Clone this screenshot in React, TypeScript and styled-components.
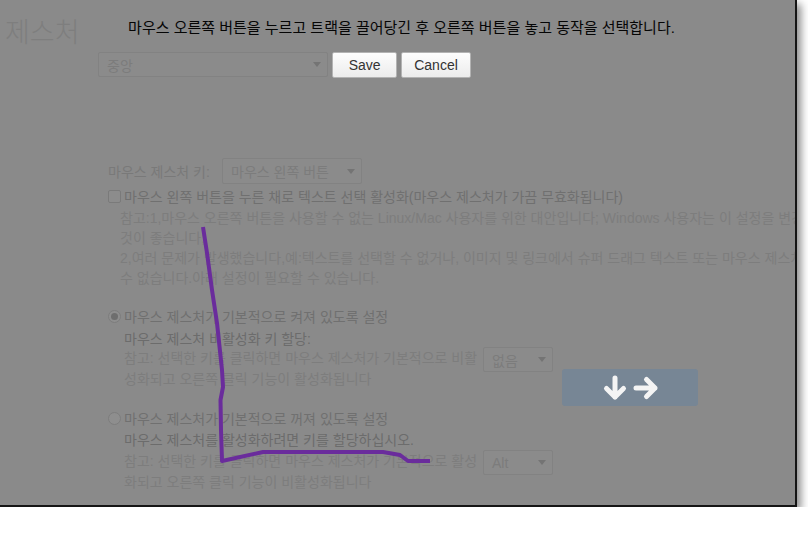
import React from 'react';
import styled, { createGlobalStyle } from 'styled-components';

const GlobalStyle = createGlobalStyle`
  html, body { margin: 0; padding: 0; background: #ffffff; }
  body { font-family: "Liberation Sans", "Noto Sans CJK KR", sans-serif; }
`;

const Window = styled.div`
  position: relative;
  box-sizing: border-box;
  width: 797px;
  height: 507px;
  border-right: 2px solid #151515;
  border-bottom: 2px solid #151515;
  background: #8a8a8a;
  overflow: hidden;
  box-shadow: 4px 4px 8px rgba(0, 0, 0, 0.45);
`;

const Page = styled.div`
  padding-top: 13px;
  font-size: 14px;
  color: #7d7d7d;
  white-space: nowrap;
`;

const Title = styled.h1`
  margin: 0 0 0 5px;
  font-family: "Noto Sans CJK KR", sans-serif;
  font-size: 27px;
  font-weight: 300;
  line-height: 36px;
  color: #7e7e7e;
`;

const Select = styled.div<{ $w: number; $h?: number }>`
  display: flex;
  align-items: center;
  justify-content: space-between;
  box-sizing: border-box;
  flex: none;
  width: ${(p) => p.$w}px;
  height: ${(p) => p.$h ?? 25}px;
  padding: 0 6px 0 8px;
  border: 1px solid #828282;
  border-radius: 2px;
  background: #8b8b8b;
  color: #7c7c7c;
  font-size: 14px;
`;

const Caret = styled.span`
  width: 0;
  height: 0;
  border-left: 4px solid transparent;
  border-right: 4px solid transparent;
  border-top: 5px solid #747474;
`;

const TopSelectRow = styled.div`
  margin: 3px 0 0 98px;
`;

const KeyRow = styled.div`
  display: flex;
  align-items: center;
  margin: 81px 0 0 108px;
`;

const KeyLabel = styled.span`
  width: 114px;
  color: #797979;
`;

const CheckRow = styled.div<{ $mt: number }>`
  display: flex;
  align-items: center;
  height: 20px;
  margin: ${(p) => p.$mt}px 0 0 108px;
`;

const CheckBox = styled.span`
  box-sizing: border-box;
  width: 13px;
  height: 13px;
  margin-right: 3px;
  border: 1px solid #7a7a7a;
  border-radius: 2px;
  background: #8c8c8c;
`;

const Radio = styled.span<{ $checked?: boolean }>`
  position: relative;
  box-sizing: border-box;
  width: 13px;
  height: 13px;
  margin-right: 3px;
  border: 1px solid #7d7d7d;
  border-radius: 50%;
  background: #8e8e8e;
  &::after {
    content: '';
    display: ${(p) => (p.$checked ? 'block' : 'none')};
    position: absolute;
    left: 2px;
    top: 2px;
    width: 7px;
    height: 7px;
    border-radius: 50%;
    background: #6e6e6e;
  }
`;

const OptionLabel = styled.span`
  color: #707070;
`;

const Notes = styled.div`
  margin: 2px 0 0 120px;
  line-height: 20px;
`;

const SubLabel = styled.div<{ $mt: number }>`
  margin: ${(p) => p.$mt}px 0 0 124px;
  line-height: 20px;
  color: #6c6c6c;
`;

const NoteRow = styled.div<{ $mt: number }>`
  display: flex;
  align-items: flex-start;
  margin: ${(p) => p.$mt}px 0 0 124px;
`;

const NoteText = styled.div`
  width: 359px;
  padding-top: 1px;
  line-height: 21px;
`;

const Overlay = styled.div`
  position: absolute;
  inset: 0;
  display: flex;
  flex-direction: column;
  align-items: center;
  padding: 18px 0 0 8px;
`;

const Prompt = styled.div`
  font-size: 15px;
  line-height: 20px;
  color: #050505;
  white-space: nowrap;
`;

const ButtonRow = styled.div`
  display: flex;
  gap: 4px;
  margin-top: 14px;
`;

const Button = styled.button`
  box-sizing: border-box;
  min-width: 65px;
  height: 26px;
  padding: 0 12px;
  border: 1px solid #b3b3b3;
  border-radius: 2px;
  background: linear-gradient(#fdfdfd, #ececec);
  color: #333333;
  font-family: "Liberation Sans", sans-serif;
  font-size: 14px;
`;

const GestureHint = styled.div`
  position: absolute;
  left: 562px;
  top: 369px;
  width: 136px;
  height: 37px;
  display: flex;
  align-items: center;
  justify-content: center;
  gap: 3px;
  border-radius: 3px;
  background: #778695;
`;

const Trace = styled.svg`
  position: absolute;
  left: 0;
  top: 0;
  pointer-events: none;
`;

const Arrow = ({ d }: { d: string }) => (
  <svg width="28" height="28" viewBox="0 0 28 28" fill="none">
    <path d={d} stroke="#f4f4f4" strokeWidth="5" strokeLinecap="round" strokeLinejoin="round" />
  </svg>
);

export default function App() {
  return (
    <>
      <GlobalStyle />
      <Window>
        <Page>
          <Title>제스처</Title>
          <TopSelectRow>
            <Select $w={230}>
              <span>중앙</span>
              <Caret />
            </Select>
          </TopSelectRow>

          <KeyRow>
            <KeyLabel>마우스 제스처 키:</KeyLabel>
            <Select $w={140} $h={26}>
              <span>마우스 왼쪽 버튼</span>
              <Caret />
            </Select>
          </KeyRow>

          <CheckRow $mt={2}>
            <CheckBox />
            <OptionLabel>마우스 왼쪽 버튼을 누른 채로 텍스트 선택 활성화(마우스 제스처가 가끔 무효화됩니다)</OptionLabel>
          </CheckRow>
          <Notes>
            <div>참고:1,마우스 오른쪽 버튼을 사용할 수 없는 Linux/Mac 사용자를 위한 대안입니다; Windows 사용자는 이 설정을 변경하지 않는</div>
            <div>것이 좋습니다;</div>
            <div>2,여러 문제가 발생했습니다,예:텍스트를 선택할 수 없거나, 이미지 및 링크에서 슈퍼 드래그 텍스트 또는 마우스 제스처를 사용할</div>
            <div>수 없습니다.아래 설정이 필요할 수 있습니다.</div>
          </Notes>

          <CheckRow $mt={18}>
            <Radio $checked />
            <OptionLabel>마우스 제스처가 기본적으로 켜져 있도록 설정</OptionLabel>
          </CheckRow>
          <SubLabel $mt={3}>마우스 제스처 비활성화 키 할당:</SubLabel>
          <NoteRow $mt={-2}>
            <NoteText>
              <div>참고: 선택한 키를 클릭하면 마우스 제스처가 기본적으로 비활</div>
              <div>성화되고 오른쪽 클릭 기능이 활성화됩니다</div>
            </NoteText>
            <Select $w={70}>
              <span>없음</span>
              <Caret />
            </Select>
          </NoteRow>

          <CheckRow $mt={18}>
            <Radio />
            <OptionLabel>마우스 제스처가 기본적으로 꺼져 있도록 설정</OptionLabel>
          </CheckRow>
          <SubLabel $mt={2}>마우스 제스처를 활성화하려면 키를 할당하십시오.</SubLabel>
          <NoteRow $mt={0}>
            <NoteText>
              <div>참고: 선택한 키를 클릭하면 마우스 제스처가 기본적으로 활성</div>
              <div>화되고 오른쪽 클릭 기능이 비활성화됩니다</div>
            </NoteText>
            <Select $w={70}>
              <span>Alt</span>
              <Caret />
            </Select>
          </NoteRow>
        </Page>

        <Overlay>
          <Prompt>마우스 오른쪽 버튼을 누르고 트랙을 끌어당긴 후 오른쪽 버튼을 놓고 동작을 선택합니다.</Prompt>
          <ButtonRow>
            <Button>Save</Button>
            <Button>Cancel</Button>
          </ButtonRow>
        </Overlay>

        <GestureHint>
          <Arrow d="M14 4 V23 M5.5 14.5 L14 23 L22.5 14.5" />
          <Arrow d="M4 14 H23 M14.5 5.5 L23 14 L14.5 22.5" />
        </GestureHint>

        <Trace width="795" height="505" viewBox="0 0 795 505">
          <path
            d="M203 227 L207 253 L212 290 L217 323 L222 370 L223 387 L220.5 400 L221 430 L222 461 L263 452 L383 452 L400 455 L408 461 L430 461"
            fill="none"
            stroke="#6a2c9c"
            strokeWidth="4"
            strokeLinejoin="round"
            strokeLinecap="butt"
          />
        </Trace>
      </Window>
    </>
  );
}
